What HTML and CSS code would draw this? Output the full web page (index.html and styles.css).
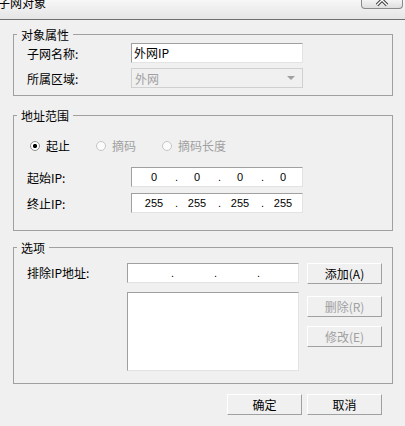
FILE: index.html
```html
<!DOCTYPE html>
<html lang="zh-CN">
  <head>
    <meta charset="UTF-8" />
    <title>子网对象</title>
    <link rel="stylesheet" href="styles.css">
  </head>
  <body>
    <div class="titlebar">
      <span class="title">子网对象</span>
      <span class="close">
        <svg width="14" height="14" viewBox="0 0 14 14">
          <path d="M2 2 L12 12 M12 2 L2 12" stroke="#3c3c3c" stroke-width="3.4" fill="none" />
          <path d="M2 2 L12 12 M12 2 L2 12" stroke="#fff" stroke-width="1.4" fill="none" />
        </svg>
      </span>
    </div>

    <div class="dialog">
      <fieldset class="group">
        <legend>对象属性</legend>
        <div class="rows props">
          <label>子网名称:</label>
          <div class="edit">外网IP</div>
          <label>所属区域:</label>
          <div class="combo"><span>外网</span><span class="arrow"></span></div>
        </div>
      </fieldset>

      <fieldset class="group range">
        <legend>地址范围</legend>
        <div class="radios">
          <span class="radio checked"><span class="dot"></span>起止</span>
          <span class="radio disabled"><span class="dot"></span>摘码</span>
          <span class="radio disabled"><span class="dot"></span>摘码长度</span>
        </div>
        <div class="rows ips">
          <label>起始IP:</label>
          <div class="ip"><span>0</span><i>.</i><span>0</span><i>.</i><span>0</span><i>.</i><span>0</span></div>
          <label>终止IP:</label>
          <div class="ip"><span>255</span><i>.</i><span>255</span><i>.</i><span>255</span><i>.</i><span>255</span></div>
        </div>
      </fieldset>

      <fieldset class="group options">
        <legend>选项</legend>
        <div class="opt-grid">
          <label>排除IP地址:</label>
          <div class="ip"><span></span><i>.</i><span></span><i>.</i><span></span><i>.</i><span></span></div>
          <button class="btn">添加(A)</button>
          <div></div>
          <div class="listbox"></div>
          <div class="side-btns">
            <button class="btn del" disabled>删除(R)</button>
            <button class="btn mod" disabled>修改(E)</button>
          </div>
        </div>
      </fieldset>

      <div class="footer">
        <button class="btn">确定</button>
        <button class="btn">取消</button>
      </div>
    </div>
  </body>
</html>
```

FILE: styles.css
```css
body {
  margin: 0;
  width: 405px;
  height: 426px;
  overflow: hidden;
  background: #f0f0f0;
  color: #000;
  font-family: "Noto Sans CJK SC", sans-serif;
  font-size: 12px;
}

/* window title (cut off at the top) */
.titlebar {
  height: 19px;
  display: flex;
  justify-content: space-between;
  align-items: flex-start;
  border-bottom: 1px solid #6f6f6f;
  background: linear-gradient(#f7f7f7, #e5e5e5);
}
.title {
  font-size: 12px;
  line-height: 12px;
  margin: -3px 0 0 -2px;
}
.close {
  width: 40px;
  height: 8px;
  margin-right: 2px;
  border: 1px solid #8a8a8a;
  border-top: none;
  border-radius: 0 0 4px 4px;
  background: linear-gradient(#f4f4f4, #dedede);
  overflow: hidden;
}
.close svg {
  display: block;
  margin: -7px auto 0;
}

.dialog {
  padding-left: 13px;
}

/* group boxes */
.group {
  width: 380px;
  box-sizing: border-box;
  margin: 7px 0 0;
  padding: 0;
  border: 1px solid #a0a0a0;
}
.group legend {
  margin-left: 3px;
  padding: 0 4px;
  line-height: 15px;
}
.range {
  margin-top: 12px;
}
.options {
  margin-top: 9px;
}

.rows {
  display: grid;
  grid-template-columns: 104px 172px;
  grid-auto-rows: 20px;
  align-items: center;
  padding-left: 13px;
}
.props {
  row-gap: 5px;
  padding-top: 1px;
  padding-bottom: 7px;
}
.ips {
  row-gap: 6px;
  margin-top: 16px;
  padding-bottom: 17px;
}

.edit,
.combo,
.ip,
.listbox {
  height: 20px;
  box-sizing: border-box;
  border: 1px solid;
  border-color: #a0a0a0 #e3e3e3 #e3e3e3 #a0a0a0;
  background: #fff;
}
.edit {
  padding-left: 2px;
  line-height: 18px;
}
.combo {
  display: flex;
  justify-content: space-between;
  align-items: center;
  padding: 0 7px 0 3px;
  color: #a0a0a0;
  background: #f0f0f0;
  border-color: #d0d0d0;
}
.arrow {
  width: 0;
  height: 0;
  border-left: 4px solid transparent;
  border-right: 4px solid transparent;
  border-top: 4px solid #a0a0a0;
}

/* radio buttons */
.radios {
  display: grid;
  grid-template-columns: 66px 66px auto;
  height: 14px;
  align-items: center;
  margin-top: 14px;
  padding-left: 16px;
}
.radio {
  display: flex;
  align-items: center;
  gap: 6px;
}
.dot {
  width: 10px;
  height: 10px;
  box-sizing: border-box;
  border-radius: 50%;
  border: 1px solid #8e8e8e;
  background: #fff;
}
.checked .dot {
  background: radial-gradient(circle, #000 0 1.8px, #fff 2.4px);
}
.disabled {
  color: #a0a0a0;
}
.disabled .dot {
  border-color: #c6c6c6;
  background: #fbfbfb;
}

/* ip address control */
.ip {
  display: flex;
  align-items: center;
  padding-left: 3px;
  font-family: "Liberation Sans", sans-serif;
  font-size: 11px;
}
.ip span {
  width: 38px;
  text-align: center;
}
.ip i {
  width: 5px;
  font-style: normal;
  text-align: right;
}

/* options box */
.opt-grid {
  display: grid;
  grid-template-columns: 92px 172px 75px;
  column-gap: 8px;
  row-gap: 8px;
  align-items: start;
  padding: 8px 0 12px 13px;
}
.opt-grid > label {
  line-height: 20px;
}
.listbox {
  height: 79px;
}
.side-btns {
  display: flex;
  flex-direction: column;
}
.del {
  margin-top: 4px;
}
.mod {
  margin-top: 9px;
}

.btn {
  width: 75px;
  height: 21px;
  box-sizing: border-box;
  padding: 0;
  border: 1px solid;
  border-color: #fff #a0a0a0 #a0a0a0 #fff;
  background: #f0f0f0;
  color: #000;
  font-family: "Noto Sans CJK SC", sans-serif;
  font-size: 12px;
}
.btn:disabled {
  color: #a0a0a0;
}

.footer {
  display: flex;
  justify-content: flex-end;
  gap: 5px;
  width: 369px;
  margin-top: 10px;
}
```
